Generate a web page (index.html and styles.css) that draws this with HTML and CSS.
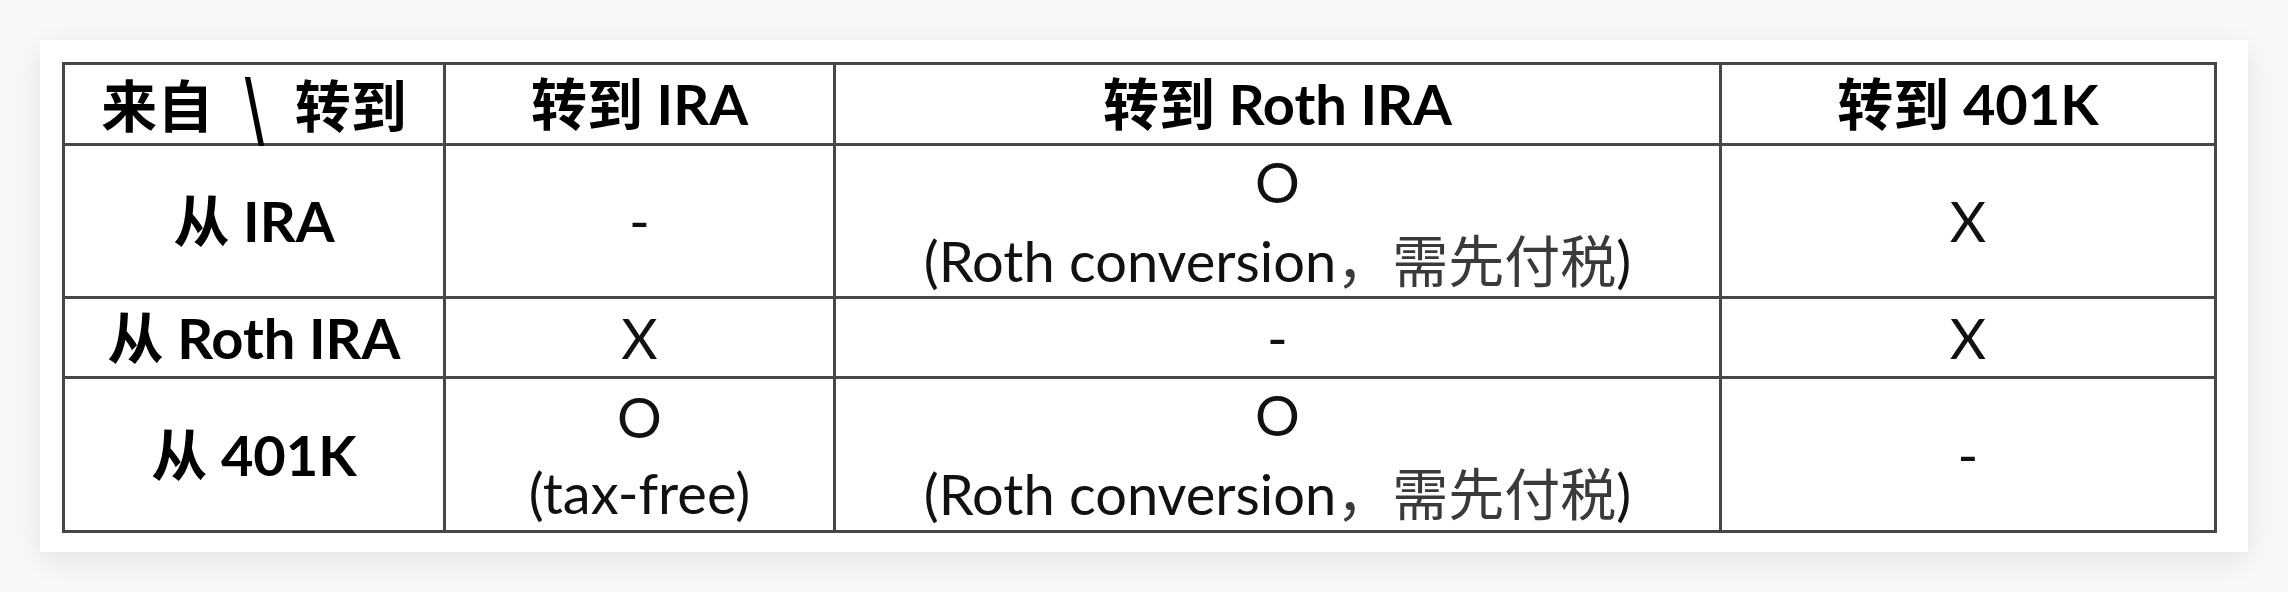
FILE: index.html
```html
<!DOCTYPE html>
<html lang="zh-CN">
<head>
<meta charset="utf-8">
<title>IRA 转换表</title>
<link rel="stylesheet" href="styles.css">
</head>
<body>
<div class="card">
  <div class="grid">
    <div class="cell head"><div class="txt">来自<span class="slash">\</span>转到</div></div>
    <div class="cell head"><div class="txt">转到 IRA</div></div>
    <div class="cell head"><div class="txt">转到 Roth IRA</div></div>
    <div class="cell head"><div class="txt">转到 401K</div></div>

    <div class="cell head"><div class="txt">从 IRA</div></div>
    <div class="cell"><div class="txt">-</div></div>
    <div class="cell"><div class="txt">O<br>(Roth conversion<span class="cjk">，需先付税</span>)</div></div>
    <div class="cell"><div class="txt">X</div></div>

    <div class="cell head"><div class="txt">从 Roth IRA</div></div>
    <div class="cell"><div class="txt">X</div></div>
    <div class="cell"><div class="txt">-</div></div>
    <div class="cell"><div class="txt">X</div></div>

    <div class="cell head"><div class="txt">从 401K</div></div>
    <div class="cell"><div class="txt">O<br>(tax-free)</div></div>
    <div class="cell"><div class="txt">O<br>(Roth conversion<span class="cjk">，需先付税</span>)</div></div>
    <div class="cell"><div class="txt">-</div></div>
  </div>
</div>
</body>
</html>
```

FILE: styles.css
```css
html, body {
  margin: 0;
  padding: 0;
}
body {
  background: #f8f8f8;
  padding: 40px;
  width: 2208px;
}
.card {
  background: #ffffff;
  width: 2208px;
  height: 512px;
  box-sizing: border-box;
  padding: 22px 0 0 22px;
  box-shadow: 0 8px 28px rgba(0, 0, 0, 0.09);
}
.grid {
  display: grid;
  grid-template-columns: 378px 387px 883px 492px;
  grid-template-rows: 78px 150px 77px 151px;
  gap: 3px;
  padding: 3px;
  background: #474747;
  width: max-content;
}
.cell {
  background: #ffffff;
  display: flex;
  align-items: center;
  justify-content: center;
  font-family: "Lato", "Noto Sans CJK SC", sans-serif;
  font-size: 56px;
  color: #111111;
}
.txt {
  text-align: center;
  line-height: 76px;
  white-space: nowrap;
}
.head {
  font-weight: 700;
  color: #000000;
}
.slash {
  font-family: "Noto Sans CJK SC", sans-serif;
  font-weight: 700;
  display: inline-block;
  margin: 0 30px;
  transform: scaleY(1.25);
}
.cjk {
  font-family: "Noto Sans CJK SC", sans-serif;
  font-weight: 400;
  color: #3a3a3a;
}
```
